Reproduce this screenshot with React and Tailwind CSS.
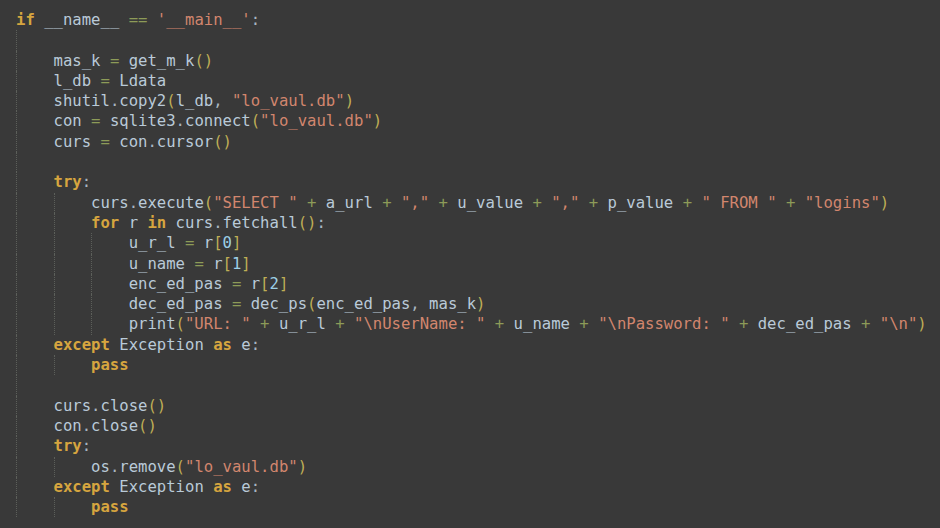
import React from "react";

const LINES = [
  [0, `if __name__ == '__main__':`],
  [1, ``],
  [1, `mas_k = get_m_k()`],
  [1, `l_db = Ldata`],
  [1, `shutil.copy2(l_db, "lo_vaul.db")`],
  [1, `con = sqlite3.connect("lo_vaul.db")`],
  [1, `curs = con.cursor()`],
  [1, ``],
  [1, `try:`],
  [2, `curs.execute("SELECT " + a_url + "," + u_value + "," + p_value + " FROM " + "logins")`],
  [2, `for r in curs.fetchall():`],
  [3, `u_r_l = r[0]`],
  [3, `u_name = r[1]`],
  [3, `enc_ed_pas = r[2]`],
  [3, `dec_ed_pas = dec_ps(enc_ed_pas, mas_k)`],
  [3, `print("URL: " + u_r_l + "\\nUserName: " + u_name + "\\nPassword: " + dec_ed_pas + "\\n")`],
  [1, `except Exception as e:`],
  [2, `pass`],
  [1, ``],
  [1, `curs.close()`],
  [1, `con.close()`],
  [1, `try:`],
  [2, `os.remove("lo_vaul.db")`],
  [1, `except Exception as e:`],
  [2, `pass`],
];

const KEYWORDS = new Set(["if", "try", "except", "for", "in", "as", "pass"]);

const CLS = {
  kw: "text-[#d6a53f] font-semibold",
  id: "text-[#b9cad8]",
  str: "text-[#d2866e]",
  op: "text-[#8d9b58]",
  br: "text-[#bfae56]",
  num: "text-[#9dcfe6]",
  pu: "text-[#a8b6c2]",
  ws: "",
};

function tokenize(s) {
  const out = [];
  const re = /("(?:[^"\\]|\\.)*"|'(?:[^'\\]|\\.)*')|([A-Za-z_][A-Za-z_0-9]*)|(\d+)|(==|=|\+)|([()[\]])|(\s+)|(.)/g;
  let m;
  while ((m = re.exec(s))) {
    if (m[1]) out.push(["str", m[1]]);
    else if (m[2]) out.push([KEYWORDS.has(m[2]) ? "kw" : "id", m[2]]);
    else if (m[3]) out.push(["num", m[3]]);
    else if (m[4]) out.push(["op", m[4]]);
    else if (m[5]) out.push(["br", m[5]]);
    else if (m[6]) out.push(["ws", m[6]]);
    else out.push(["pu", m[7]]);
  }
  return out;
}

export default function App() {
  return (
    <div className="w-[940px] h-[528px] bg-[#393939] overflow-hidden pt-[10px] pl-[16px]">
      <div
        className="text-[15.6px] leading-[20.3px] whitespace-pre"
        style={{ fontFamily: '"DejaVu Sans Mono", monospace' }}
      >
        {LINES.map(([indent, code], i) => (
          <div key={i} className="flex h-[20.3px]">
            {Array.from({ length: indent }).map((_, k) => (
              <span
                key={k}
                className="inline-block w-[4ch] shrink-0 h-full border-l border-dotted border-[#5c5f5a]"
              />
            ))}
            <span>
              {tokenize(code).map(([t, txt], j) => (
                <span key={j} className={CLS[t]}>
                  {txt}
                </span>
              ))}
            </span>
          </div>
        ))}
      </div>
    </div>
  );
}
